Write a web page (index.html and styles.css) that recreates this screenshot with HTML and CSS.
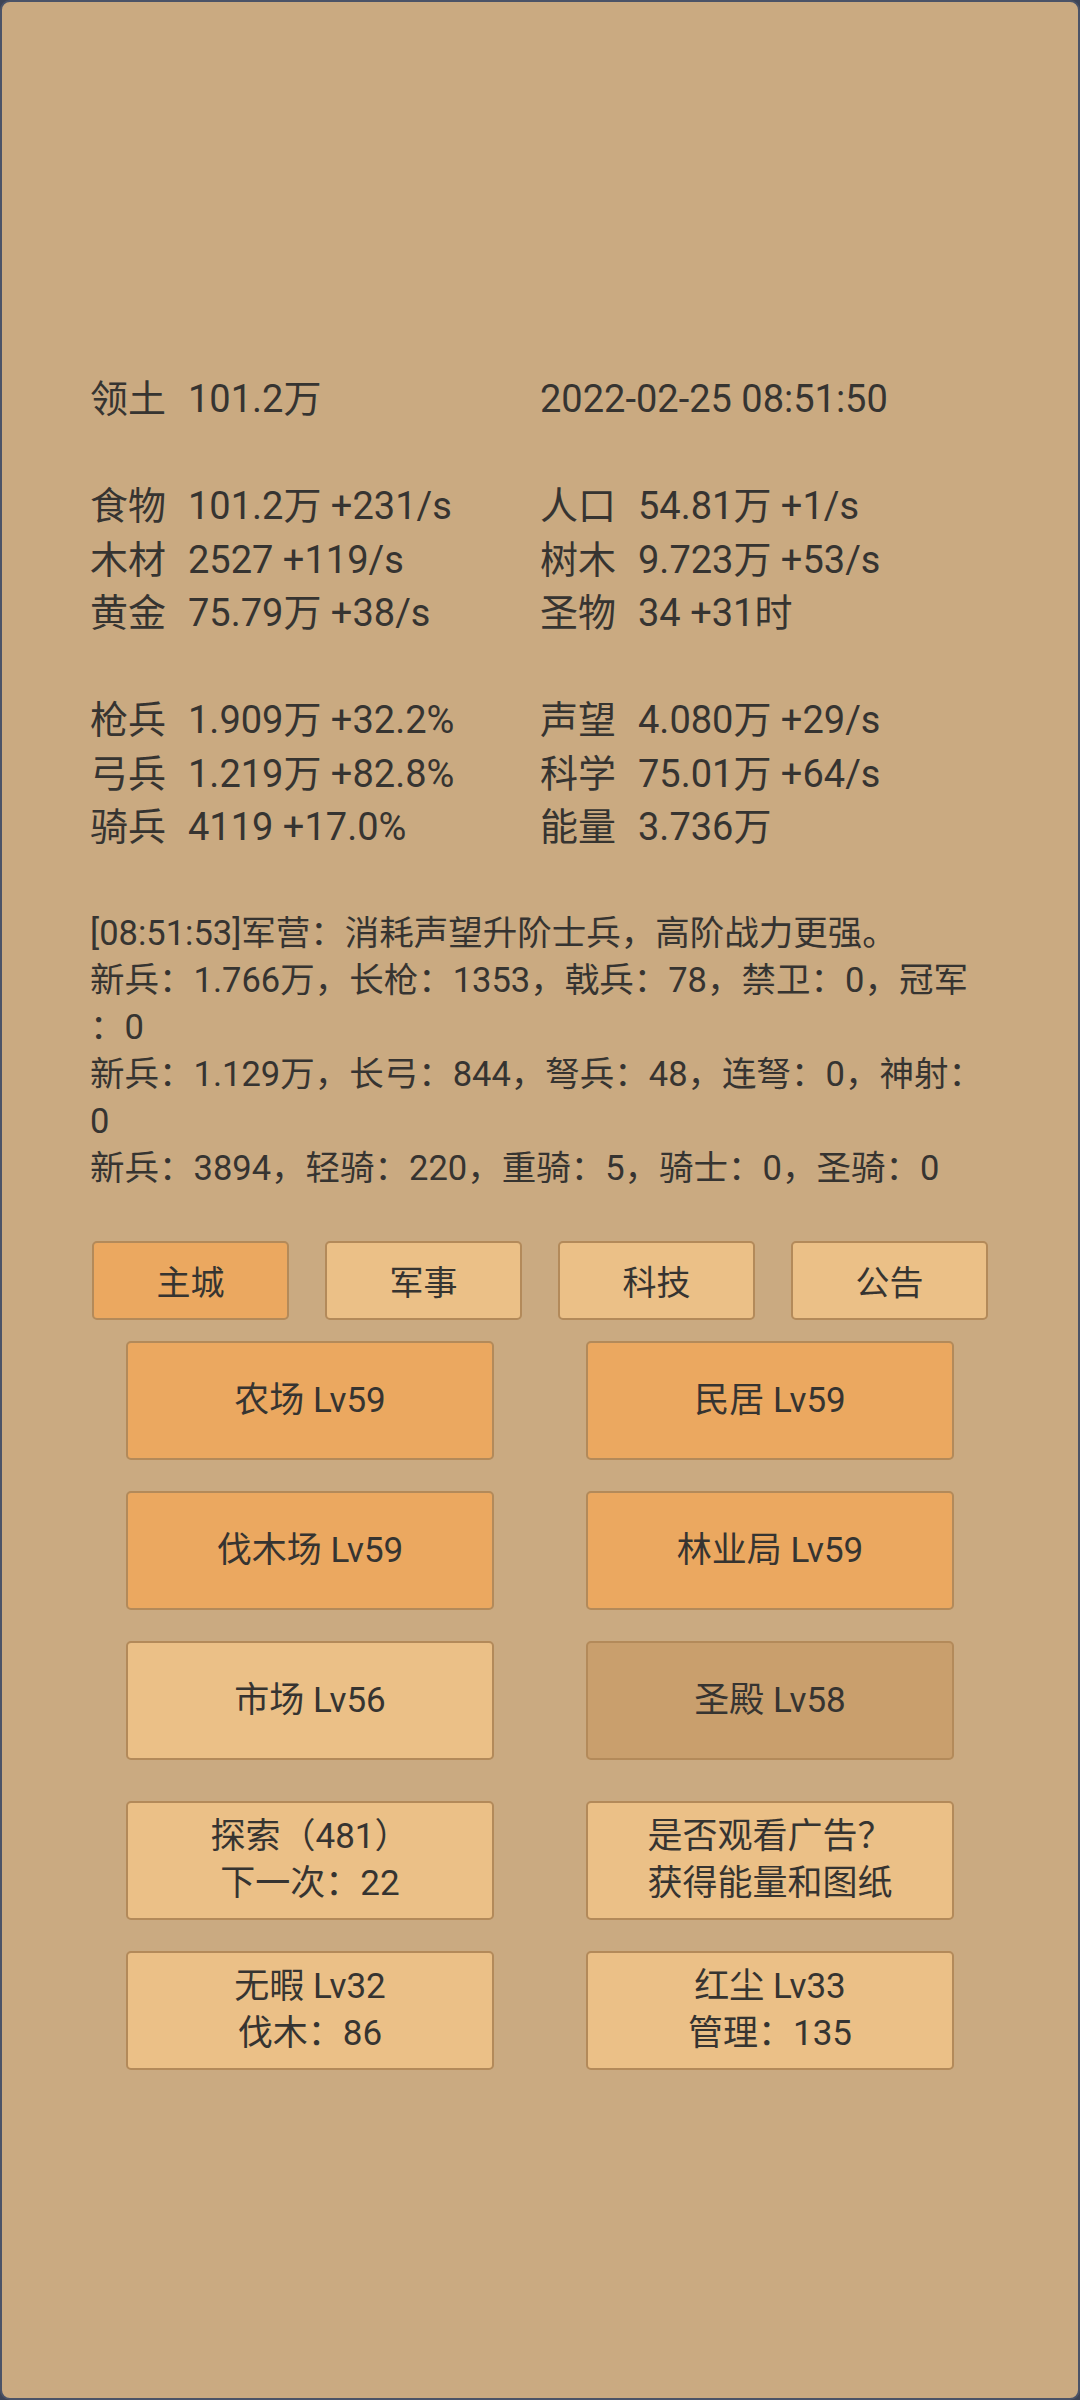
FILE: index.html
```html
<!DOCTYPE html>
<html lang="zh-CN">
<head>
<meta charset="utf-8">
<title>领土</title>
<link rel="stylesheet" href="styles.css">
</head>
<body>
<div class="frame">
  <div class="stats">
    <div class="cell"><span class="label">领土</span><span class="value">101.2万</span></div>
    <div class="cell"><span class="value">2022-02-25 08:51:50</span></div>
    <div class="spacer"></div>
    <div class="cell"><span class="label">食物</span><span class="value">101.2万 +231/s</span></div>
    <div class="cell"><span class="label">人口</span><span class="value">54.81万 +1/s</span></div>
    <div class="cell"><span class="label">木材</span><span class="value">2527 +119/s</span></div>
    <div class="cell"><span class="label">树木</span><span class="value">9.723万 +53/s</span></div>
    <div class="cell"><span class="label">黄金</span><span class="value">75.79万 +38/s</span></div>
    <div class="cell"><span class="label">圣物</span><span class="value">34 +31时</span></div>
    <div class="spacer"></div>
    <div class="cell"><span class="label">枪兵</span><span class="value">1.909万 +32.2%</span></div>
    <div class="cell"><span class="label">声望</span><span class="value">4.080万 +29/s</span></div>
    <div class="cell"><span class="label">弓兵</span><span class="value">1.219万 +82.8%</span></div>
    <div class="cell"><span class="label">科学</span><span class="value">75.01万 +64/s</span></div>
    <div class="cell"><span class="label">骑兵</span><span class="value">4119 +17.0%</span></div>
    <div class="cell"><span class="label">能量</span><span class="value">3.736万</span></div>
  </div>

  <div class="log">
    <div class="log-line">[08:51:53]军营：消耗声望升阶士兵，高阶战力更强。</div>
    <div class="log-line">新兵：1.766万，长枪：1353，戟兵：78，禁卫：0，冠军</div>
    <div class="log-line">：0</div>
    <div class="log-line">新兵：1.129万，长弓：844，弩兵：48，连弩：0，神射：</div>
    <div class="log-line">0</div>
    <div class="log-line">新兵：3894，轻骑：220，重骑：5，骑士：0，圣骑：0</div>
  </div>

  <div class="tabs">
    <div class="tab tab-active">主城</div>
    <div class="tab">军事</div>
    <div class="tab">科技</div>
    <div class="tab">公告</div>
  </div>

  <div class="buildings">
    <div class="btn btn-orange">农场 Lv59</div>
    <div class="btn btn-orange">民居 Lv59</div>
    <div class="btn btn-orange">伐木场 Lv59</div>
    <div class="btn btn-orange">林业局 Lv59</div>
    <div class="btn btn-light">市场 Lv56</div>
    <div class="btn btn-dark">圣殿 Lv58</div>
  </div>

  <div class="buildings extras">
    <div class="btn btn-light two-line"><span>探索（481）</span><span>下一次：22</span></div>
    <div class="btn btn-light two-line"><span>是否观看广告？</span><span>获得能量和图纸</span></div>
    <div class="btn btn-light two-line"><span>无暇 Lv32</span><span>伐木：86</span></div>
    <div class="btn btn-light two-line"><span>红尘 Lv33</span><span>管理：135</span></div>
  </div>
</div>
</body>
</html>
```

FILE: styles.css
```css
html, body {
  margin: 0;
  padding: 0;
  background: #3d4456;
}

body {
  width: 1080px;
  height: 2400px;
  overflow: hidden;
  font-family: Roboto, "Noto Sans CJK SC", sans-serif;
  color: #363431;
}

.frame {
  box-sizing: border-box;
  width: 1080px;
  height: 2400px;
  border: 2px solid #4b5367;
  border-radius: 10px;
  background: #caaa81;
  padding: 371px 88px 0 88px;
}

.stats {
  display: grid;
  grid-template-columns: 450px 450px;
  font-size: 38px;
  line-height: 53.5px;
}

.cell {
  display: flex;
  white-space: nowrap;
}

.label {
  width: 98px;
  flex-shrink: 0;
}

.spacer {
  grid-column: span 2;
  height: 53.5px;
}

.log {
  margin-top: 55px;
  font-size: 34.5px;
  line-height: 47px;
}

.log-line {
  white-space: nowrap;
}

.tabs {
  margin-top: 49px;
  display: grid;
  grid-template-columns: repeat(4, 1fr);
  column-gap: 36px;
  padding: 0 2px;
}

.tab {
  box-sizing: border-box;
  height: 79px;
  border: 2px solid #b38a5a;
  border-radius: 5px;
  background: #ebc087;
  display: flex;
  align-items: center;
  justify-content: center;
  font-size: 34px;
}

.tab-active {
  background: #eba860;
}

.buildings {
  margin-top: 21px;
  display: grid;
  grid-template-columns: 368px 368px;
  column-gap: 92px;
  row-gap: 31px;
  justify-content: center;
}

.extras {
  margin-top: 41px;
}

.btn {
  box-sizing: border-box;
  height: 119px;
  border: 2px solid #b38a5a;
  border-radius: 5px;
  display: flex;
  align-items: center;
  justify-content: center;
  font-size: 35px;
  line-height: 47px;
}

.two-line {
  flex-direction: column;
}

.btn-orange {
  background: #eba860;
}

.btn-light {
  background: #ebc087;
}

.btn-dark {
  background: #c99f6d;
}
```
